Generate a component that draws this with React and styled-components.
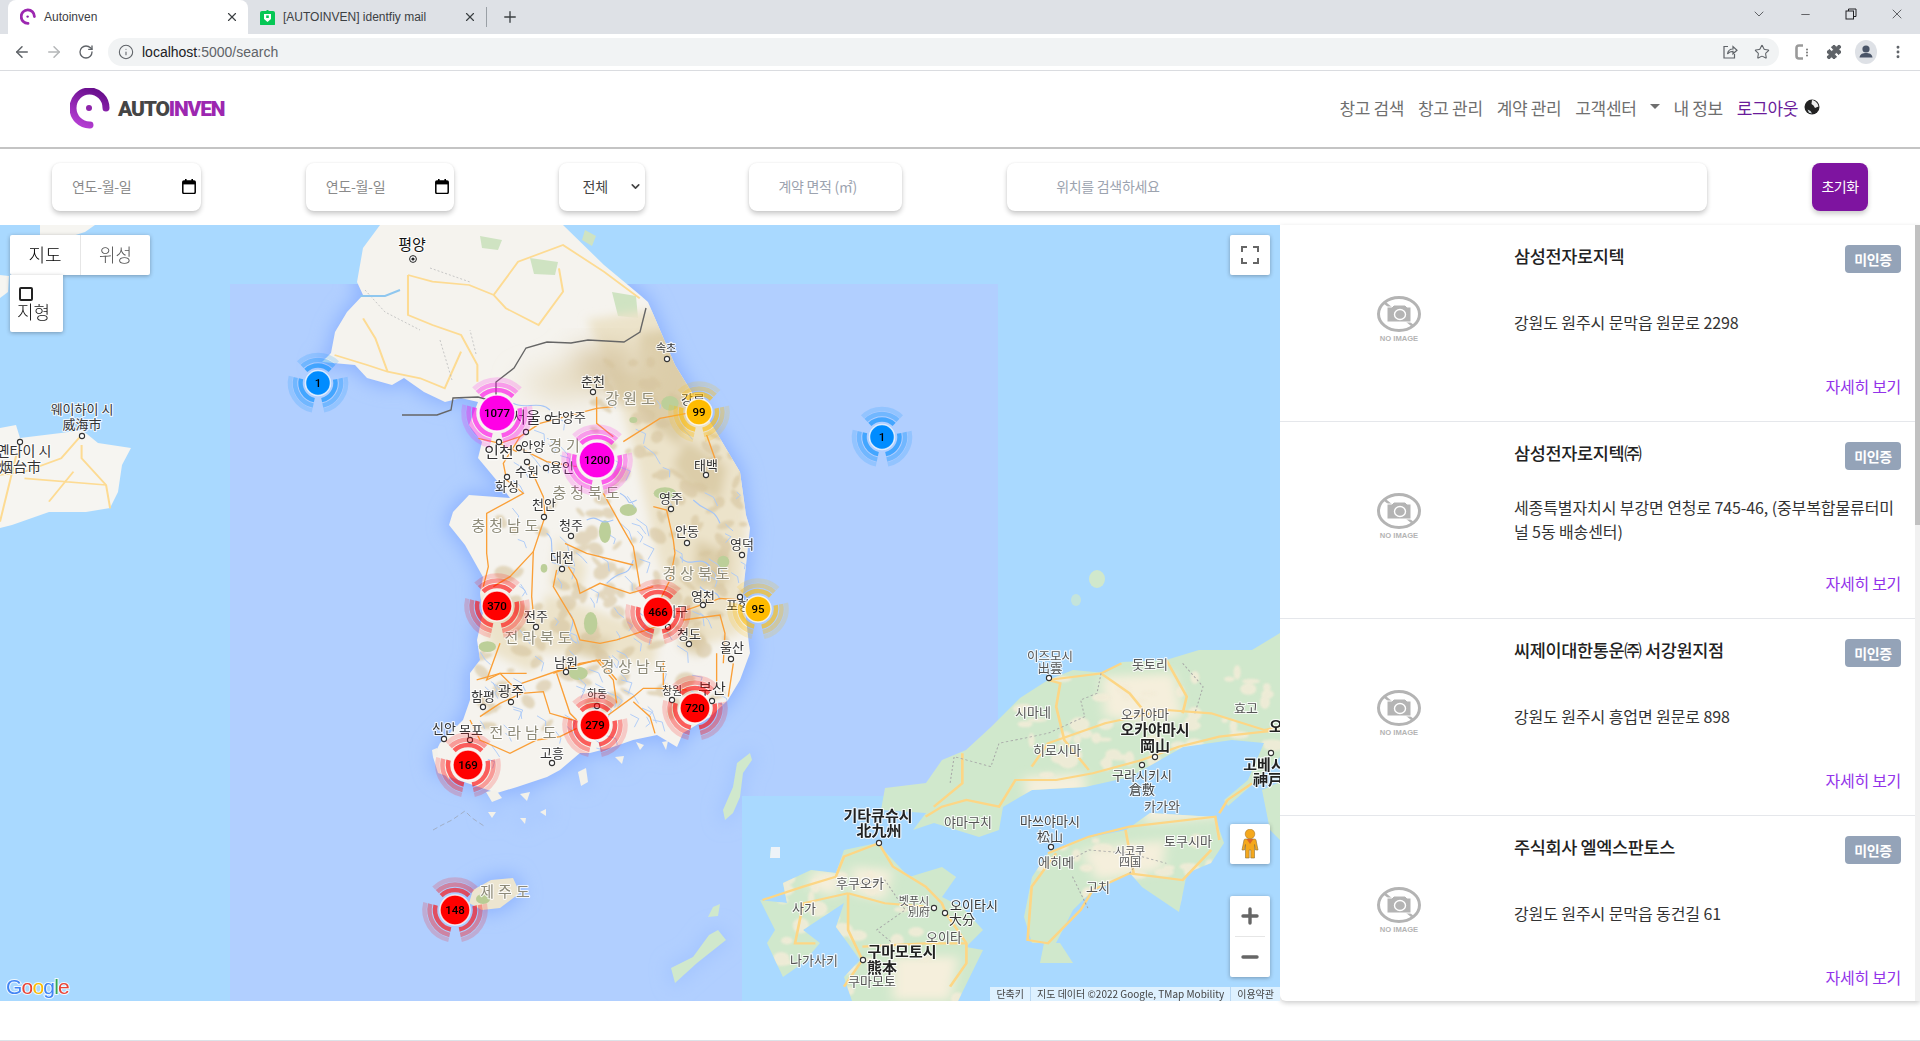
import styled, { createGlobalStyle } from 'styled-components'
import { ArrowLeft, ArrowRight, RotateCw, Info, Star, MoreVertical, X, Plus, Minus, ChevronDown, Puzzle } from 'lucide-react'

const GlobalStyle = createGlobalStyle`
html, body { margin: 0; padding: 0; overflow: hidden; background: #fff; }
body { font-family: "Noto Sans CJK KR", "Noto Sans", sans-serif; }
* { box-sizing: border-box; }
`

const Page = styled.div`
width: 1920px;
height: 1041px;
display: flex;
flex-direction: column;
overflow: hidden;`

// browser chrome
const TabStrip = styled.div`
height: 34px;
flex: none;
display: flex;
align-items: flex-end;
padding-left: 8px;
background: #dee1e6;
font-family: "Liberation Sans", sans-serif;
font-size: 12px;
color: #3c4043;`

const Tab = styled.div`
width: ${p => p.$width}px;
height: 34px;
display: flex;
align-items: center;
padding: 0 9px 0 12px;
gap: 8px;
position: relative;
background: ${p => (p.$active ? '#fff' : 'transparent')};
border-radius: 8px 8px 0 0;
span { flex: 1; white-space: nowrap; }`

const TabDivider = styled.div`
width: 1px;
height: 20px;
margin: 0 0 7px 0;
background: #9aa0a6;`

const NewTab = styled.div`
width: 46px;
height: 34px;
display: flex;
align-items: center;
justify-content: center;
color: #3c4043;`

const WindowButtons = styled.div`
margin-left: auto;
height: 28px;
align-self: flex-start;
display: flex;
align-items: center;`

const WindowButton = styled.div`
width: 46px;
height: 28px;
display: flex;
align-items: center;
justify-content: center;
color: #202124;`

const Toolbar = styled.div`
height: 37px;
flex: none;
display: flex;
align-items: center;
padding: 0 6px;
background: #fff;
border-bottom: 1px solid #dadce0;`

const ToolButton = styled.div`
width: 32px;
height: 32px;
flex: none;
display: flex;
align-items: center;
justify-content: center;
color: ${p => p.$color || '#5f6368'};`

const Omnibox = styled.div`
flex: 1;
height: 28px;
margin: 0 7px 0 6px;
padding: 0 9px 0 10px;
display: flex;
align-items: center;
gap: 8px;
background: #f1f3f4;
border-radius: 14px;
color: #5f6368;`

const Url = styled.div`
flex: 1;
font-family: "Liberation Sans", sans-serif;
font-size: 14px;
color: #5f6368;
b { font-weight: 400; color: #202124; }`

const OmniIcons = styled.div`
display: flex;
gap: 16px;
align-items: center;`

// site header
const Header = styled.header`
height: 78px;
flex: none;
display: flex;
align-items: center;
justify-content: space-between;
padding: 0 100px 0 70px;
border-bottom: 2px solid #c4c4c4;`

const Logo = styled.div`
display: flex;
align-items: center;
gap: 8px;`

const LogoWord = styled.div`
font-family: Roboto, sans-serif;
font-weight: 900;
font-size: 21px;
letter-spacing: -1.2px;
color: #454545;
span { color: #9c27b0; }`

const Nav = styled.nav`
display: flex;
align-items: center;
gap: 14px;
padding-bottom: 4px;
font-size: 17px;`

const NavLink = styled.a`
color: ${p => (p.$active ? '#6a1b9a' : '#6f6f6f')};
white-space: nowrap;
letter-spacing: -0.35px;
display: flex;
align-items: center;
gap: 6px;`

const Caret = styled.i`
display: inline-block;
margin-left: 7px;
margin-top: -1px;
border-top: 5px solid #6f6f6f;
border-left: 5px solid transparent;
border-right: 5px solid transparent;`

// filter bar
const FilterBar = styled.div`
height: 76px;
flex: none;
display: flex;
align-items: center;
justify-content: space-between;
padding: 0 52px;`

const Card = styled.div`
width: ${p => p.$width}px;
height: 48px;
display: flex;
align-items: center;
justify-content: space-between;
padding: 0 ${p => p.$right || 5}px 2px ${p => p.$left || 20}px;
background: #fff;
border-radius: 8px;
box-shadow: 0 3px 5px rgba(0, 0, 0, 0.2), 0 0 2px rgba(0, 0, 0, 0.08);
font-size: 14px;
letter-spacing: -0.3px;
color: ${p => p.$color || '#8a8a8a'};`

const TextField = styled.input`
width: ${p => p.$width}px;
height: 48px;
padding: 0 0 2px ${p => p.$left}px;
border: 0;
outline: 0;
border-radius: 8px;
background: #fff;
box-shadow: 0 3px 5px rgba(0, 0, 0, 0.2), 0 0 2px rgba(0, 0, 0, 0.08);
font: inherit;
font-size: 14px;
letter-spacing: -0.3px;
&::placeholder { color: #9ca3af; opacity: 1; }`

const ResetButton = styled.button`
width: 56px;
height: 48px;
padding: 0 0 2px;
border: 0;
border-radius: 8px;
background: #7e14a0;
color: #fff;
font: inherit;
font-size: 14px;
letter-spacing: -0.5px;
box-shadow: 0 3px 5px rgba(0, 0, 0, 0.2);`

// main area
const Main = styled.main`
height: 776px;
flex: none;
display: flex;`

const MapBox = styled.div`
width: 1280px;
height: 776px;
position: relative;
overflow: hidden;
background: #a9d9ff;
svg.base { display: block; }`

const MapControl = styled.div`
position: absolute;
top: ${p => p.$top}px;
left: ${p => p.$left}px;
width: ${p => p.$w}px;
height: ${p => p.$h}px;
background: #fff;
border-radius: 2px;
box-shadow: 0 1px 4px rgba(0, 0, 0, 0.3);
display: flex;
align-items: center;
justify-content: center;
color: #666;`

const MapTab = styled.div`
width: 70px;
height: 40px;
display: flex;
align-items: center;
justify-content: center;
padding-bottom: 2px;
font-size: 18px;
font-weight: 300;
color: ${p => (p.$active ? '#000' : '#565656')};
& + & { border-left: 1px solid #e6e6e6; }`

const TerrainBox = styled.div`
position: absolute;
top: 50px;
left: 10px;
width: 53px;
height: 57px;
padding: 12px 0 0 9px;
background: #fff;
border-radius: 0 0 2px 2px;
box-shadow: 0 1px 4px rgba(0, 0, 0, 0.3);
font-size: 18px;
font-weight: 300;
line-height: 24px;
color: #111;
i { display: block; width: 14px; height: 14px; border: 2px solid #222; border-radius: 2px; }
span { display: block; margin: -2px 0 0 -2px; white-space: nowrap; }`

const ZoomCell = styled.div`
height: 40px;
display: flex;
align-items: center;
justify-content: center;`

const ZoomDivider = styled.div`
width: 30px;
height: 1px;
flex: none;
background: #e6e6e6;`

const ZoomStack = styled(MapControl)`
flex-direction: column;`

const Attribution = styled.div`
position: absolute;
right: 0;
bottom: 0;
height: 14px;
display: flex;
font-family: "Noto Sans CJK KR", "Liberation Sans", sans-serif;
font-size: 10px;
line-height: 13px;
color: #444;
background: rgba(255, 255, 255, 0.62);
span { padding: 0 6px; white-space: nowrap; }
span + span { border-left: 1px solid #b9d7f2; }`

const MapLabel = styled.text`
font-family: "Noto Sans CJK KR", sans-serif;
text-anchor: middle;
dominant-baseline: central;
transform: translateY(-2px);
paint-order: stroke;
stroke: rgba(255, 255, 255, 0.8);
stroke-width: 2.2px;
stroke-linejoin: round;
font-size: ${p => p.$size}px;
font-weight: ${p => (p.$bold ? 700 : 400)};
fill: ${p => p.$fill};
letter-spacing: ${p => p.$gap || 0}px;`

const ClusterCount = styled.text`
font-family: Roboto, "Liberation Sans", sans-serif;
font-size: 11.5px;
font-weight: 500;
text-anchor: middle;
dominant-baseline: central;
fill: #000;`

const GoogleMark = styled.text`
font-family: "Liberation Sans", sans-serif;
font-size: 21px;
letter-spacing: -0.8px;
paint-order: stroke;
stroke: rgba(255, 255, 255, 0.8);
stroke-width: 2px;`

// result list
const ResultPanel = styled.section`
width: 640px;
height: 776px;
display: flex;
border-radius: 0 0 0 6px;
overflow: hidden;
box-shadow: 0 2px 5px rgba(0, 0, 0, 0.2);`

const ResultList = styled.div`
flex: 1;
min-width: 0;`

const ScrollTrack = styled.div`
width: 5px;
flex: none;
background: #f1f1f1;`

const ScrollThumb = styled.div`
height: 300px;
background: #c1c1c1;`

const Row = styled.article`
height: 197px;
display: flex;
border-bottom: 1px solid #e5e7eb;
&:last-child { border-bottom: 0; }`

const Thumb = styled.div`
width: 234px;
flex: none;
display: flex;
align-items: flex-start;
justify-content: center;
padding: 71px 0 0 3px;`

const RowBody = styled.div`
width: 387px;
height: 197px;
display: flex;
flex-direction: column;
padding: 20px 0 23px;`

const RowTop = styled.div`
display: flex;
justify-content: space-between;
align-items: flex-start;`

const Title = styled.h3`
margin: 0;
font-size: 17.5px;
line-height: 22px;
font-weight: 500;
letter-spacing: -0.35px;
color: #222;`

const Badge = styled.span`
width: 56px;
height: 28px;
display: flex;
align-items: center;
justify-content: center;
padding-bottom: 1px;
background: #94a3b8;
border-radius: 4px;
color: #fff;
font-size: 14px;
font-weight: 700;
letter-spacing: -0.4px;`

const Address = styled.p`
flex: 1;
margin: 0;
padding-bottom: 2px;
display: flex;
align-items: center;
font-size: 16px;
line-height: 24px;
letter-spacing: -0.1px;
word-break: break-all;
color: #333;`

const More = styled.a`
align-self: flex-end;
font-size: 16px;
line-height: 26px;
letter-spacing: -0.3px;
color: #9333ea;`

const Footer = styled.div`
flex: 1;
border-bottom: 1px solid #dbe3e8;`

const land = {
  china: '0,428 16,425 20,438 61,433 82,430 98,443 131,448 122,465 118,492 110,508 86,512 49,512 12,525 0,528',
  dalian: '40,225 95,225 85,232 60,240 40,246',
  liaoning: '0,275 9,276 8,292 0,298',
  korea: '380,225 363,248 357,282 363,295 347,312 335,332 331,353 322,362 355,365 367,378 392,385 404,378 424,392 445,402 461,398 478,402 469,425 482,442 478,458 498,482 510,498 469,495 453,512 449,525 465,545 483,577 480,593 483,613 477,640 480,660 470,673 470,700 463,720 440,743 433,757 438,773 467,783 497,793 517,787 547,777 560,770 580,753 590,753 613,747 633,740 657,735 677,747 683,733 710,717 728,700 740,680 750,653 743,593 750,528 746,515 740,472 718,435 675,365 648,302 640,295 604,265 563,225',
  jeju: '473,890 491,880 513,878 520,893 500,908 482,910 469,903',
  honshu: '1280,633 1252,650 1199,650 1166,660 1122,662 1105,673 1073,670 1048,680 1020,698 991,727 966,750 942,760 926,783 885,788 881,810 926,813 913,830 934,823 979,837 999,830 1003,807 1032,790 1085,787 1130,777 1183,747 1232,740 1264,743 1248,780 1224,800 1228,806 1262,776 1280,757',
  awaji: '1262,790 1280,782 1280,840 1270,830',
  shikoku: '1048,853 1077,840 1126,830 1150,813 1215,817 1224,843 1211,863 1187,873 1179,912 1142,887 1130,873 1093,890 1073,910 1056,943 1032,943 1024,917 1032,877',
  shikoku2: '1044,943 1060,943 1073,963 1040,963',
  kyushu: '877,843 893,860 909,877 942,867 956,877 942,897 962,907 983,930 966,947 983,950 958,1001 852,1001 844,977 860,960 836,927 844,903 803,930 820,943 803,963 783,977 767,943 775,930 760,900 787,903 783,883 811,870 836,873 844,850',
  iki: '771,847 780,847 780,858 770,858',
  tsushima: '750,753 752,760 743,773 740,797 733,813 725,820 723,810 733,787 737,763',
  goto: '718,930 726,940 697,963 675,983 671,968 693,957 709,935',
  goto2: '713,907 720,904 718,916 708,917'
}

const southIslands = ['432,750 437,748 438,756 433,757', '578,772 586,768 588,782 581,786', '486,792 496,790 502,798 492,802', '444,738 452,737 450,746', '520,794 530,792 527,801', '636,742 644,745 640,750', '662,742 668,741 666,750', '615,757 624,756 622,764', '445,775 450,773 449,780', '488,812 496,812 492,818', '540,812 546,809 546,816', '520,818 526,818 525,824']

// terrain patches, zoom coords of the korean peninsula: x = 400 + X / 3, y = 380 + Y / 3
const cream = [
  '560,-180 940,-240 1060,20 1040,420 1020,760 900,800 780,560 700,200 620,-60',
  '440,640 780,760 760,860 560,820 380,820',
  '220,640 430,700 400,880 280,820',
  '470,470 560,560 540,640 450,620'
]
const tan = [
  '720,-140 860,-160 880,60 840,200 760,140 700,60',
  '860,180 980,260 960,360 860,320 820,250',
  '620,-40 720,-20 700,80 640,60',
  '890,480 990,520 980,620 880,620',
  '540,760 640,780 600,840 520,820',
  '850,720 910,760 900,830 840,800'
]
const green = [
  [810, 70, 26, 22], [685, 390, 26, 18], [615, 455, 18, 34], [572, 730, 20, 34], [970, 545, 18, 18],
  [432, 565, 10, 13], [262, 800, 26, 16], [700, 120, 12, 9], [795, 340, 34, 18], [535, 880, 28, 20]
]
const rivers = [
  'M510 700 C540 740 480 760 530 790', 'M620 610 C670 560 680 600 700 540', 'M660 340 C700 360 670 380 710 360',
  'M880 360 C920 400 940 380 960 430', 'M840 530 C870 570 900 520 930 560', 'M340 70 C370 90 420 60 450 90',
  'M560 420 C600 400 590 440 640 420', 'M720 700 C740 720 750 690 780 720', 'M130 260 L150 268 140 272',
  'M900 620 C920 650 950 620 960 660', 'M440 460 C470 480 440 510 470 540'
]
const krRoads = [
  'M360 170 L310 250 320 300 370 340 260 400 260 520 265 560 250 620',
  'M380 240 L430 350 435 410 400 515 395 650 400 700',
  'M400 515 L330 590 280 620',
  'M420 130 L590 85 640 80 M590 50 L590 130 640 170',
  'M670 185 L780 115 860 100',
  'M610 340 L660 430 700 500 720 620',
  'M760 380 L800 390 820 480 825 520 810 600 780 660',
  'M495 490 L560 520 700 555',
  'M505 560 L530 600 540 640 600 610 690 640 760 620',
  'M470 570 L460 620 520 720 540 780 600 790 650 780 770 740',
  'M830 700 L960 655 1020 660 M850 720 L960 705 975 760 970 850',
  'M460 880 L540 850 600 840 650 900',
  'M235 175 L300 190 360 170 420 130 M350 200 L440 245 530 260 M300 190 L350 215',
  'M920 165 L950 250',
  'M230 900 L300 880 380 880'
]
// south coast roads, x = 400 + X / 3, y = 640 + Y / 3
const krSouthRoads = [
  'M240 230 L300 190 365 160 430 155 450 220 520 240',
  'M300 10 L260 120 300 100 330 130 365 160',
  'M365 130 L480 90 590 60 640 120 650 190',
  'M470 100 L510 220 530 240',
  'M625 225 L700 170 730 145 800 145 860 150',
  'M790 60 L790 140',
  'M700 185 L750 230 765 280',
  'M210 240 L240 300 330 340 410 300 480 290 530 265',
  'M950 40 L950 130 M1000 70 L985 170'
]
// north korea roads, x = X / 2.45, y = 225 + Y / 3
const nkRoads = [
  'M1000 150 L1000 270 1060 300 1130 330 1170 420 1170 470',
  'M1000 150 L1060 170 1150 180 1210 210 1270 110 1380 60 1480 140 1568 220',
  'M1210 210 L1240 250 1320 300 1380 200 1370 130',
  'M820 390 L900 420 950 440 1030 460 1090 490 1130 380',
  'M950 440 L920 340 890 280',
  'M0 750 L60 740 150 700 200 630 M0 890 L20 790 40 690 M180 740 L120 830 M60 760 L260 780',
  'M200 660 L200 700 260 780 270 850'
]
// japan roads, x = 640 + X / 2.45, y = 610 + Y / 3
const jpRoads = [
  'M700 620 L740 590 800 570 880 590 920 510 1020 510 1110 490 1230 450 1320 410 1420 380 1568 360',
  'M1000 210 L1030 220 1020 290 1040 390 1100 480',
  'M960 470 L1000 400 1140 340 1290 300 1400 310 1530 360 1568 350',
  'M1000 210 L1130 190 1200 250 1240 310',
  'M1290 150 L1340 260 1330 310 M1180 160 L1130 190',
  'M790 430 L790 520 720 590',
  'M585 700 L500 740 480 800 400 830 300 870',
  'M585 700 L620 770 700 830 740 880 750 910 800 1000 800 1060 760 1130',
  'M510 850 L400 880 380 1000 430 1000',
  'M510 850 L600 880 700 890',
  'M510 850 L510 960 545 1050 500 1130',
  'M545 1010 L700 1000 800 1000',
  'M1000 730 L1100 680 1200 650 1410 620 1420 690',
  'M1020 730 L960 830 950 990 1000 1000 1080 900 1110 840 1200 790 1330 810 1400 720',
  'M1190 660 L1210 790',
  'M1440 570 L1420 610 M1500 520 L1440 570'
]
const jpBorders = [
  'M1130 190 L1120 250 1080 270 1090 320 1000 370 880 400 860 470 770 440 760 520',
  'M1330 160 L1380 230 1360 310',
  'M1040 760 L1100 720 1200 730 1290 760 M1060 800 L1100 900 M1200 790 L1230 740',
  'M480 830 L600 810 650 900 580 960 620 1000'
]
const jpPale = [
  '1130,200 1310,190 1330,320 1240,340 1140,320',
  '1230,560 1400,560 1420,620 1240,640',
  '1080,720 1290,690 1280,780 1120,810',
  '940,500 1090,490 1090,560 950,570',
  '520,770 620,780 600,870 520,850',
  '620,1040 780,1040 760,1170 620,1170',
  '430,780 500,790 480,860 410,830'
]

// scattered terrain flecks, same seed gives the same picture on every run
const scatter = (n, x0, y0, x1, y1, seed) => {
  let s = seed
  const r = () => (s = (s * 16807) % 2147483647) / 2147483647
  return Array.from({ length: n }, () => [x0 + r() * (x1 - x0), y0 + r() * (y1 - y0), 3 + r() * 8, 2 + r() * 6, r() * 12 - 6])
}
const krFlecks = [...scatter(110, 590, 340, 750, 650, 4711), ...scatter(36, 480, 640, 720, 730, 991), ...scatter(40, 500, 500, 640, 650, 77)]
const krStreams = [...scatter(90, 510, 400, 745, 740, 1234), ...scatter(40, 480, 640, 700, 760, 5150)]
const jpFlecks = [...scatter(60, 1020, 670, 1280, 780, 31), ...scatter(30, 1040, 840, 1210, 930, 808), ...scatter(30, 780, 870, 960, 1000, 2024)]

const cities = [
  [412, 245, '평양', 15, 0, '#111'], [82, 410, '웨이하이 시', 13], [82, 425, '威海市', 13], [24, 452, '옌타이 시', 14], [20, 468, '烟台市', 14],
  [593, 382, '춘천'], [526, 418, '서울', 16], [568, 418, '남양주'], [499, 453, '인천', 16], [533, 447, '안양'], [527, 472, '수원'],
  [562, 468, '용인'], [507, 487, '화성'], [706, 466, '태백'], [671, 499, '영주'], [544, 505, '천안'], [571, 526, '청주'], [687, 532, '안동'],
  [742, 545, '영덕'], [562, 558, '대전'], [703, 597, '영천'], [738, 606, '포항'], [536, 617, '전주'], [676, 612, '대구'], [689, 635, '청도'],
  [732, 648, '울산'], [566, 663, '남원'], [483, 697, '함평'], [511, 692, '광주', 14], [597, 695, '하동', 11], [672, 692, '창원', 11],
  [712, 689, '부산', 15], [444, 729, '신안'], [471, 731, '목포'], [552, 754, '고흥'], [666, 349, '속초', 11], [693, 400, '강릉'],
  [1050, 657, '이즈모시', 12.5, 0, '#555'], [1050, 669, '出雲', 12.5, 0, '#555'], [1150, 665, '돗토리', 13, 0, '#555'], [1033, 713, '시마네', 13, 0, '#555'],
  [1246, 709, '효고', 13, 0, '#555'], [1145, 715, '오카야마', 13, 0, '#555'], [1057, 751, '히로시마', 13, 0, '#555'], [1142, 776, '구라시키시', 13, 0, '#444'],
  [1142, 790, '倉敷', 13, 0, '#444'], [1162, 807, '카가와', 13, 0, '#555'], [968, 823, '야마구치', 13, 0, '#555'], [1050, 822, '마쓰야마시', 13, 0, '#444'],
  [1050, 837, '松山', 13, 0, '#444'], [1188, 842, '토쿠시마', 13, 0, '#555'], [1130, 852, '시코쿠', 11, 0, '#555'], [1130, 863, '四国', 11, 0, '#555'],
  [1056, 863, '에히메', 13, 0, '#555'], [860, 884, '후쿠오카', 13, 0, '#555'], [1098, 888, '고치', 13, 0, '#555'], [914, 902, '벳푸시', 11, 0, '#555'],
  [919, 913, '別府', 11, 0, '#555'], [974, 906, '오이타시', 13, 0, '#333'], [962, 920, '大分', 13, 0, '#333'], [804, 909, '사가', 13, 0, '#555'],
  [944, 938, '오이타', 13, 0, '#555'], [814, 961, '나가사키', 13, 0, '#555'], [872, 982, '쿠마모토', 13, 0, '#555']
]
const majors = [
  [1155, 730, '오카야마시'], [1155, 746, '岡山'], [1264, 765, '고베시'], [1268, 780, '神戸'], [878, 816, '기타큐슈시'], [879, 831, '北九州'],
  [902, 952, '구마모토시'], [882, 968, '熊本'], [1276, 727, '오']
]
const provinces = [
  [632, 399, '강원도'], [566, 446, '경기'], [588, 493, '충청북도'], [507, 526, '충청남도'], [698, 574, '경상북도'], [540, 638, '전라북도'],
  [636, 667, '경상남도'], [525, 733, '전라남도'], [507, 892, '제주도']
]
const dots = [
  [82, 436], [20, 442], [526, 432], [548, 418], [499, 442], [519, 448], [527, 462], [546, 468], [507, 477], [706, 475], [671, 509], [544, 517],
  [571, 536], [687, 543], [742, 555], [562, 569], [703, 605], [740, 597], [536, 627], [668, 627], [689, 644], [731, 659], [566, 672], [483, 707],
  [511, 702], [597, 706], [672, 700], [712, 701], [444, 739], [470, 740], [552, 763], [667, 359], [593, 392], [1049, 678], [1155, 757], [1271, 753],
  [1142, 765], [879, 843], [1051, 847], [934, 908], [945, 913], [863, 960]
]
const clusters = [
  [318, 383, 1, '#008cff', 12.5], [882, 437, 1, '#008cff', 12.5], [699, 412, 99, '#ffbb00', 13], [758, 609, 95, '#ffbb00', 13],
  [497, 413, 1077, '#ff00e6', 18], [597, 460, 1200, '#ff00e6', 18], [497, 606, 370, '#ff0000', 15], [658, 612, 466, '#ff0000', 15],
  [695, 708, 720, '#ff0000', 15], [595, 725, 279, '#ff0000', 15], [468, 765, 169, '#ff0000', 15], [455, 910, 148, '#ff0000', 15]
]
const rings = [[5, 4.5, 0.62], [10.5, 4.5, 0.36], [15.5, 4.5, 0.17]]
const sectors = [[-134, -46], [-12, 78], [102, 194]]

const arc = (cx, cy, r, a0, a1) => {
  const rad = d => (d * Math.PI) / 180
  const x0 = cx + r * Math.cos(rad(a0))
  const y0 = cy + r * Math.sin(rad(a0))
  const x1 = cx + r * Math.cos(rad(a1))
  const y1 = cy + r * Math.sin(rad(a1))
  return `M${x0} ${y0} A${r} ${r} 0 0 1 ${x1} ${y1}`
}

const Cluster = ({ x, y, count, color, r }) => (
  <g>
    {rings.map(([off, w, op]) =>
      sectors.map(([a0, a1]) => (
        <path key={off + '-' + a0} d={arc(x, y, r + off, a0, a1)} fill='none' stroke={color} strokeWidth={w} opacity={op} />
      ))
    )}
    <circle cx={x} cy={y} r={r} fill={color} stroke='rgba(255,255,255,.75)' strokeWidth='1.5' />
    <ClusterCount x={x} y={y}>{count}</ClusterCount>
  </g>
)

const MapDrawing = () => {
  const coast = [land.korea, land.jeju]
  const faint = [land.tsushima, land.goto, ...southIslands]
  return (
    <svg className='base' width='1280' height='776' viewBox='0 225 1280 776'>
      <defs>
        <clipPath id='tile'>
          <path d='M230 284 H998 V796 H742 V1001 H230 Z' />
        </clipPath>
        <clipPath id='koreaClip'>
          <polygon points={land.korea} />
        </clipPath>
        <clipPath id='japanClip'>
          {['honshu', 'shikoku', 'kyushu'].map(k => <polygon key={k} points={land[k]} />)}
        </clipPath>
        <filter id='soft' x='-20%' y='-20%' width='140%' height='140%'>
          <feGaussianBlur stdDeviation='9' />
        </filter>
        <filter id='wash' x='-20%' y='-20%' width='140%' height='140%'>
          <feGaussianBlur stdDeviation='14' />
        </filter>
        <filter id='fleck' x='-20%' y='-20%' width='140%' height='140%'>
          <feGaussianBlur stdDeviation='1' />
        </filter>
      </defs>
      <rect x='0' y='225' width='1280' height='776' fill='#a9d9ff' />
      <path d='M230 284 H998 V796 H742 V1001 H230 Z' fill='#b1cfff' />
      <g clipPath='url(#tile)'>
        <g filter='url(#soft)'>
          {coast.map((p, i) => <polygon key={i} points={p} fill='#8fb4ff' stroke='#8fb4ff' strokeWidth='8' />)}
          {faint.map((p, i) => <polygon key={i} points={p} fill='#a3c4ff' stroke='#a3c4ff' strokeWidth='6' />)}
        </g>
      </g>

      <polygon points={land.china} fill='#f6f5f1' />
      <polygon points={land.dalian} fill='#f6f5f1' />
      <polygon points={land.liaoning} fill='#f6f5f1' />
      <polygon points={land.korea} fill='#f5f3ee' />
      <polygon points={land.jeju} fill='#ece5d0' />
      {southIslands.map((p, i) => <polygon key={i} points={p} fill='#f3f1ea' />)}

      {/* north korea */}
      <g fill='#cfe3c2'>
        <polygon points='480,236 502,240 498,250 482,248' />
        <polygon points='530,258 558,262 555,275 534,274' />
        <polygon points='612,292 636,296 638,318 618,316' />
        <polygon points='585,230 596,236 592,246 582,240' />
      </g>
      <g transform='translate(0 225) scale(.408 .3333)' fill='none' stroke='#fddb93' strokeWidth='5'>
        {nkRoads.map((d, i) => <path key={i} d={d} />)}
      </g>
      <path d='M365 290 L385 312 420 330 M430 268 L470 282 M476 354 L470 330 M440 340 L452 380' fill='none' stroke='#bbb' strokeWidth='.8' strokeDasharray='2 2' />
      <path d='M360 296 L385 296 400 290' fill='none' stroke='#8fc7ef' strokeWidth='2' />

      {/* south korea terrain */}
      <g clipPath='url(#koreaClip)'>
        <g transform='translate(400 380) scale(.3333)'>
          <g filter='url(#wash)'>
            {cream.map((p, i) => <polygon key={i} points={p} fill='#ece3ca' />)}
            {tan.map((p, i) => <polygon key={i} points={p} fill='#dccda9' />)}
          </g>
        </g>
        <g filter='url(#wash)'>
          <polygon points='515,382 640,340 650,372 560,400' fill='#e6dcc2' />
          <polygon points='570,350 620,346 640,370 600,395' fill='#d7c6a2' />
        </g>
        <g filter='url(#fleck)' fill='#d6c49e' opacity='.6'>
          {krFlecks.map(([x, y, rx, ry, a], i) => <ellipse key={i} cx={x} cy={y} rx={rx} ry={ry} transform={`rotate(${a * 8} ${x} ${y})`} />)}
        </g>
        <g transform='translate(400 380) scale(.3333)'>
          {green.map(([cx, cy, rx, ry], i) => <ellipse key={i} cx={cx} cy={cy} rx={rx} ry={ry} fill='#bccf99' />)}
          <g fill='none' stroke='#a5c5f7' strokeWidth='3.5'>
            {rivers.map((d, i) => <path key={i} d={d} />)}
          </g>
        </g>
        <g stroke='#a9c8f8' strokeWidth='.9' fill='none'>
          {krStreams.map(([x, y, dx, dy, a], i) => <path key={i} d={`M${x} ${y} l${dx} ${dy} l${a} ${dx}`} />)}
        </g>
      </g>
      <g transform='translate(400 380) scale(.3333)' fill='none' stroke='#fa9f37' strokeWidth='4'>
        {krRoads.map((d, i) => <path key={i} d={d} />)}
      </g>
      <g transform='translate(400 640) scale(.3333)' fill='none' stroke='#fa9f37' strokeWidth='4'>
        {krSouthRoads.map((d, i) => <path key={i} d={d} />)}
      </g>
      <ellipse cx='483' cy='899' rx='7' ry='5' fill='#b9cc94' />
      <polyline points='402,415 437,415 451,410 453,398 478,397 496,402 496,382 514,368 526,348 547,342 571,343 588,340 624,342 640,332 646,308' fill='none' stroke='#666' strokeWidth='1.4' />
      <path d='M433 830 L442 825 452 820 465 811 472 818 484 826' fill='none' stroke='#9ca6b8' strokeWidth='.8' strokeDasharray='5 3' />

      {/* japan */}
      <g fill='#d0e8cc'>
        {['honshu', 'awaji', 'shikoku', 'shikoku2', 'kyushu', 'iki', 'tsushima', 'goto', 'goto2'].map(k => <polygon key={k} points={land[k]} />)}
        <ellipse cx='1097' cy='579' rx='8' ry='9' />
        <ellipse cx='1076' cy='600' rx='5' ry='6' opacity='.7' />
      </g>
      <polygon points={land.iki} fill='#eef3f8' />
      <g clipPath='url(#japanClip)'>
        <g transform='translate(640 610) scale(.408 .3333)' filter='url(#wash)'>
          {jpPale.map((p, i) => <polygon key={i} points={p} fill='#f5efdc' />)}
        </g>
        <g filter='url(#fleck)' fill='#f3ecd8' opacity='.85'>
          {jpFlecks.map(([x, y, rx, ry], i) => <ellipse key={i} cx={x} cy={y} rx={rx} ry={ry} />)}
        </g>
      </g>
      <g transform='translate(640 610) scale(.408 .3333)'>
        <g fill='none' stroke='#fdd685' strokeWidth='6.5'>
          {jpRoads.map((d, i) => <path key={i} d={d} />)}
        </g>
        <g fill='none' stroke='#a7a7a7' strokeWidth='2.5' strokeDasharray='6 6'>
          {jpBorders.map((d, i) => <path key={i} d={d} />)}
        </g>
      </g>

      {/* labels */}
      {provinces.map(([x, y, t]) => (
        <MapLabel key={t} x={x} y={y} $size={15} $fill='#8d8a78' $gap={4}>{t}</MapLabel>
      ))}
      {cities.map(([x, y, t, size = 13, , fill = '#333']) => (
        <MapLabel key={t} x={x} y={y} $size={size} $fill={fill}>{t}</MapLabel>
      ))}
      {majors.map(([x, y, t]) => (
        <MapLabel key={t} x={x} y={y} $size={15} $fill='#222' $bold>{t}</MapLabel>
      ))}
      {dots.map(([x, y], i) => <circle key={i} cx={x} cy={y} r='2.6' fill='#fff' stroke='#333' strokeWidth='1.1' />)}
      <circle cx='413' cy='259' r='3.4' fill='#fff' stroke='#222' strokeWidth='1' />
      <circle cx='413' cy='259' r='1.6' fill='#222' />

      {clusters.map(([x, y, count, color, r]) => (
        <Cluster key={x} x={x} y={y} count={count} color={color} r={r} />
      ))}

      <GoogleMark x='6' y='994'>
        <tspan fill='#4285f4'>G</tspan>
        <tspan fill='#ea4335'>o</tspan>
        <tspan fill='#fbbc05'>o</tspan>
        <tspan fill='#4285f4'>g</tspan>
        <tspan fill='#34a853'>l</tspan>
        <tspan fill='#ea4335'>e</tspan>
      </GoogleMark>
    </svg>
  )
}

const LogoIcon = () => (
  <svg width='40' height='42' viewBox='0 0 40 42'>
    <defs>
      <linearGradient id='ring' x1='0.7' y1='0' x2='0.3' y2='1'>
        <stop offset='0' stopColor='#6a0f8e' />
        <stop offset='1' stopColor='#b23cd0' />
      </linearGradient>
    </defs>
    <path d='M36 20 A16.5 17 0 1 0 20 37' fill='none' stroke='url(#ring)' strokeWidth='7' strokeLinecap='round' />
    <circle cx='19' cy='20' r='3' fill='#8e24aa' />
  </svg>
)

const SmallLogo = () => (
  <svg width='16' height='18' viewBox='0 0 40 42'>
    <path d='M36 20 A16.5 17 0 1 0 20 37' fill='none' stroke='#9c27b0' strokeWidth='7' strokeLinecap='round' />
    <circle cx='19' cy='20' r='3' fill='#8e24aa' />
  </svg>
)

const MailIcon = () => (
  <svg width='15' height='15' viewBox='0 0 15 15'>
    <rect width='15' height='15' y='1' rx='2' fill='#06c755' />
    <path d='M4 4 H11 V9 L7.5 12 4 9 Z' fill='#fff' />
    <rect x='6.2' y='5.4' width='2.6' height='2.6' fill='#06c755' />
    <rect x='6.5' y='0' width='2' height='2.5' fill='#06c755' />
  </svg>
)

const ShareIcon = () => (
  <svg width='16' height='16' viewBox='0 0 16 16' fill='none' stroke='#5f6368' strokeWidth='1.2'>
    <path d='M6 2.5 H2 V14 H12.5 V10' />
    <path d='M5.5 10 C6 6.5 8.5 5 11 5 V2.5 L15 6.2 11 9.8 V7.4 C9 7.4 7 8 5.5 10 Z' />
  </svg>
)

const ExtensionC = () => (
  <svg width='16' height='18' viewBox='0 0 16 18' fill='none' stroke='#9a9a9a'>
    <path d='M9 2.5 H5 Q2.5 2.5 2.5 5 V13 Q2.5 15.5 5 15.5 H9' strokeWidth='2.6' />
    <circle cx='13' cy='6.5' r='1' fill='#777' stroke='none' />
    <circle cx='13' cy='9.5' r='1' fill='#777' stroke='none' />
    <circle cx='13' cy='12.5' r='1' fill='#777' stroke='none' />
  </svg>
)

const Profile = () => (
  <svg width='22' height='24' viewBox='0 0 22 24'>
    <ellipse cx='11' cy='12' rx='11' ry='12' fill='#dee1e6' />
    <circle cx='11' cy='9' r='3.6' fill='#4a5568' />
    <path d='M4.5 17.5 C5 13.8 8 13 11 13 S17 13.8 17.5 17.5 Z' fill='#4a5568' />
  </svg>
)

const Restore = () => (
  <svg width='12' height='12' viewBox='0 0 12 12' fill='none' stroke='#202124'>
    <rect x='1' y='3' width='7.5' height='8' />
    <path d='M3.5 3 V1 H11 V8.5 H8.5' />
  </svg>
)

const Calendar = () => (
  <svg width='14' height='15' viewBox='0 0 14 15'>
    <rect x='0.8' y='2' width='12.4' height='12.4' rx='1.2' fill='#fff' stroke='#000' strokeWidth='1.5' />
    <rect x='0.8' y='2' width='12.4' height='3.4' fill='#000' />
    <rect x='3' y='0' width='1.6' height='3' fill='#000' />
    <rect x='9.4' y='0' width='1.6' height='3' fill='#000' />
  </svg>
)

const Globe = () => (
  <svg width='16' height='16' viewBox='0 0 16 16'>
    <circle cx='8' cy='8' r='7.5' fill='#222' />
    <path d='M8 1 C11 1.5 14 4 14.5 7.5 L11 9 9.5 6.5 7.5 5 Z' fill='#eee' />
    <path d='M3.5 10.5 L6.5 12 8 14.5 5 13.8 Z' fill='#cfd8dc' />
  </svg>
)

const Fullscreen = () => (
  <svg width='18' height='18' viewBox='0 0 18 18' fill='none' stroke='#666' strokeWidth='2'>
    <path d='M1 6 V1 H6 M12 1 H17 V6 M17 12 V17 H12 M6 17 H1 V12' />
  </svg>
)

const Pegman = () => (
  <svg width='18' height='30' viewBox='0 0 18 30'>
    <circle cx='9' cy='5' r='4.8' fill='#f5a81c' stroke='#a9772a' strokeWidth='.6' />
    <path d='M3 11 Q3 10 5 10 H13 Q15 10 15 11 L17 21 H14.5 L13.5 15.5 V29 H9.8 V21 H8.2 V29 H4.5 V15.5 L3.5 21 H1 Z' fill='#f5a81c' stroke='#8d7035' strokeWidth='.6' />
    <path d='M5.5 10 H12.5 L9 15 Z' fill='#d9662a' />
  </svg>
)

const NoImage = () => (
  <svg width='46' height='48' viewBox='0 0 46 48'>
    <ellipse cx='23' cy='18' rx='20.5' ry='16.5' fill='none' stroke='#b4b4b4' strokeWidth='3' />
    <path d='M9 7 L37 30' stroke='#b4b4b4' strokeWidth='2.4' />
    <path d='M11 11 H16 L18 9 H29 L31 11 H35 V26 H11 Z' fill='#b4b4b4' stroke='#fff' strokeWidth='1' />
    <ellipse cx='24' cy='18.5' rx='5.5' ry='5' fill='#b4b4b4' stroke='#fff' strokeWidth='1.4' />
    <text x='23' y='45' textAnchor='middle' fontFamily='Liberation Sans, sans-serif' fontSize='7.6' fontWeight='700' fill='#b4b4b4'>NO IMAGE</text>
  </svg>
)

const results = [
  { title: '삼성전자로지텍', address: '강원도 원주시 문막읍 원문로 2298' },
  { title: '삼성전자로지텍㈜', address: '세종특별자치시 부강면 연청로 745-46, (중부복합물류터미널 5동 배송센터)' },
  { title: '씨제이대한통운㈜ 서강원지점', address: '강원도 원주시 흥업면 원문로 898' },
  { title: '주식회사 엘엑스판토스', address: '강원도 원주시 문막읍 동건길 61' }
]

const App = () => {
  return (
    <Page>
      <GlobalStyle />
      <TabStrip>
        <Tab $width={240} $active>
          <SmallLogo />
          <span>Autoinven</span>
          <X size={14} strokeWidth={2} />
        </Tab>
        <Tab $width={238}>
          <MailIcon />
          <span>[AUTOINVEN] identfiy mail</span>
          <X size={14} strokeWidth={2} />
        </Tab>
        <TabDivider />
        <NewTab><Plus size={18} strokeWidth={1.8} /></NewTab>
        <WindowButtons>
          <WindowButton><ChevronDown size={16} strokeWidth={1} /></WindowButton>
          <WindowButton><Minus size={13} strokeWidth={1.2} /></WindowButton>
          <WindowButton><Restore /></WindowButton>
          <WindowButton><X size={16} strokeWidth={1} /></WindowButton>
        </WindowButtons>
      </TabStrip>
      <Toolbar>
        <ToolButton><ArrowLeft size={18} strokeWidth={2} /></ToolButton>
        <ToolButton $color='#b4b6b8'><ArrowRight size={18} strokeWidth={2} /></ToolButton>
        <ToolButton><RotateCw size={16} strokeWidth={2} /></ToolButton>
        <Omnibox>
          <Info size={16} strokeWidth={1.6} />
          <Url><b>localhost</b>:5000/search</Url>
          <OmniIcons>
            <ShareIcon />
            <Star size={16} strokeWidth={1.6} />
          </OmniIcons>
        </Omnibox>
        <ToolButton><ExtensionC /></ToolButton>
        <ToolButton><Puzzle size={16} fill='#5f6368' strokeWidth={1.5} /></ToolButton>
        <ToolButton><Profile /></ToolButton>
        <ToolButton><MoreVertical size={16} strokeWidth={2.4} /></ToolButton>
      </Toolbar>

      <Header>
        <Logo>
          <LogoIcon />
          <LogoWord>AUTO<span>INVEN</span></LogoWord>
        </Logo>
        <Nav>
          <NavLink>창고 검색</NavLink>
          <NavLink>창고 관리</NavLink>
          <NavLink>계약 관리</NavLink>
          <NavLink>고객센터<Caret /></NavLink>
          <NavLink>내 정보</NavLink>
          <NavLink $active>로그아웃<Globe /></NavLink>
        </Nav>
      </Header>

      <FilterBar>
        <Card $width={149}>연도-월-일<Calendar /></Card>
        <Card $width={148}>연도-월-일<Calendar /></Card>
        <Card $width={86} $left={24} $right={3} $color='#444'>전체<ChevronDown size={13} strokeWidth={3} /></Card>
        <TextField $width={153} $left={29} placeholder='계약 면적 (㎡)' readOnly />
        <TextField $width={700} $left={49} placeholder='위치를 검색하세요' readOnly />
        <ResetButton type='button'>초기화</ResetButton>
      </FilterBar>

      <Main>
        <MapBox>
          <MapDrawing />
          <MapControl $top={10} $left={10} $w={140} $h={40}>
            <MapTab $active>지도</MapTab>
            <MapTab>위성</MapTab>
          </MapControl>
          <TerrainBox><i /><span>지형</span></TerrainBox>
          <MapControl $top={10} $left={1230} $w={40} $h={40}><Fullscreen /></MapControl>
          <MapControl $top={599} $left={1230} $w={40} $h={40}><Pegman /></MapControl>
          <ZoomStack $top={671} $left={1230} $w={40} $h={81}>
            <ZoomCell><Plus size={24} strokeWidth={3.4} /></ZoomCell>
            <ZoomDivider />
            <ZoomCell><Minus size={24} strokeWidth={3.4} /></ZoomCell>
          </ZoomStack>
          <Attribution>
            <span>단축키</span>
            <span>지도 데이터 ©2022 Google, TMap Mobility</span>
            <span>이용약관</span>
          </Attribution>
        </MapBox>
        <ResultPanel>
          <ResultList>
            {results.map(r => (
              <Row key={r.title}>
                <Thumb><NoImage /></Thumb>
                <RowBody>
                  <RowTop>
                    <Title>{r.title}</Title>
                    <Badge>미인증</Badge>
                  </RowTop>
                  <Address><span>{r.address}</span></Address>
                  <More>자세히 보기</More>
                </RowBody>
              </Row>
            ))}
          </ResultList>
          <ScrollTrack><ScrollThumb /></ScrollTrack>
        </ResultPanel>
      </Main>
      <Footer />
    </Page>
  )
}

export default App
